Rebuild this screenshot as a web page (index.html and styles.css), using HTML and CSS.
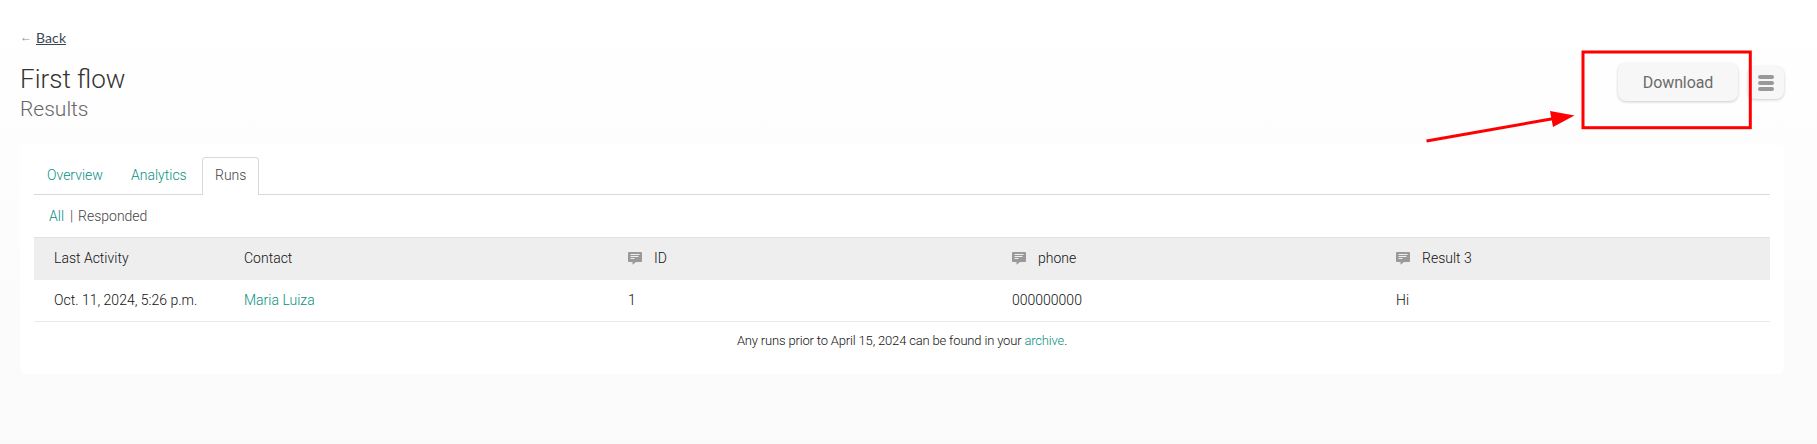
FILE: index.html
```html
<!DOCTYPE html>
<html lang="en">
<head>
<meta charset="utf-8">
<title>First flow - Results</title>
<link rel="stylesheet" href="styles.css">
</head>
<body>
<svg class="defs" width="0" height="0" aria-hidden="true">
  <symbol id="comment" viewBox="0 0 14 13">
    <path fill="#999" d="M1 0h12a1 1 0 0 1 1 1v8a1 1 0 0 1-1 1H8L4.500 12.700V10H1a1 1 0 0 1-1-1V1a1 1 0 0 1 1-1z"/>
    <path stroke="#eee" stroke-width="1" d="M2.500 2.500h9M2.500 4.500h8M2.500 6.500h4"/>
  </symbol>
</svg>
<main class="page">
  <nav class="back"><span class="back-arrow">←</span><a class="back-link" href="#">Back</a></nav>
  <header class="header">
    <div class="titles">
      <h1 class="title">First flow</h1>
      <div class="subtitle">Results</div>
    </div>
    <div class="actions">
      <button class="download">Download</button>
      <button class="menu" aria-label="Menu"><i class="bar"></i><i class="bar"></i><i class="bar"></i></button>
    </div>
  </header>
  <section class="card">
    <div class="tabs">
      <a class="tab tab-link" href="#">Overview</a>
      <a class="tab tab-link" href="#">Analytics</a>
      <span class="tab tab-active">Runs</span>
    </div>
    <div class="filters"><a href="#">All</a><span class="divider">|</span><span>Responded</span></div>
    <div class="row head">
      <div>Last Activity</div>
      <div>Contact</div>
      <div><svg class="icon"><use href="#comment"/></svg>ID</div>
      <div><svg class="icon"><use href="#comment"/></svg>phone</div>
      <div><svg class="icon"><use href="#comment"/></svg>Result 3</div>
    </div>
    <div class="row">
      <div>Oct. 11, 2024, 5:26 p.m.</div>
      <div><a href="#">Maria Luiza</a></div>
      <div>1</div>
      <div>000000000</div>
      <div>Hi</div>
    </div>
    <p class="note">Any runs prior to April 15, 2024 can be found in your <a href="#">archive</a>.</p>
  </section>
</main>
<svg class="annotation" viewBox="0 0 1817 444" aria-hidden="true">
  <rect x="1583" y="52" width="167.300" height="75.700" fill="none" stroke="#f00" stroke-width="3"/>
  <path d="M1426.500 141L1554 118.500" stroke="#f00" stroke-width="3"/>
  <path d="M1574.500 115.500L1550 111L1553 127z" fill="#f00"/>
</svg>
</body>
</html>
```

FILE: styles.css
```css
* { box-sizing: border-box; }
body {
  margin: 0;
  height: 444px;
  overflow: hidden;
  background: linear-gradient(#fff, #fafafa);
  font-family: Roboto, sans-serif;
  font-weight: 300;
  font-size: 14px;
  color: #111;
}
a { color: #088f82; text-decoration: none; }
.defs { position: absolute; }
.page { padding: 28px 33px 0 20px; }
.back { display: flex; height: 20px; line-height: 20px; gap: 4px; }
.back-arrow { width: 12px; color: #8a8f9c; font: 12px/19px "Liberation Sans", sans-serif; }
.back-link { color: #3c4653; font-family: Lato, sans-serif; font-weight: 400; text-decoration: underline; letter-spacing: 0.1px; }
.header { display: flex; justify-content: space-between; height: 97px; padding-top: 15px; }
.title { margin: 0; font-size: 26px; line-height: 32px; font-weight: 300; color: #333; }
.subtitle { font-size: 21px; line-height: 28px; color: #666; }
.actions { display: flex; align-items: flex-start; gap: 10px; }
.download, .menu {
  border: 0;
  padding: 0;
  background: #f7f7f7;
  border-radius: 8px;
  box-shadow: 0 1px 3px rgba(0, 0, 0, .2);
}
.download { width: 120px; height: 38px; font: 400 16px/38px Roboto, sans-serif; letter-spacing: -0.1px; padding-top: 1px; color: #6b6b6b; }
.menu {
  display: flex;
  flex-direction: column;
  align-items: center;
  justify-content: center;
  gap: 2px;
  width: 36px;
  height: 33px;
  margin-top: 3px;
}
.bar { width: 16px; height: 4px; border-radius: 2px; background: #999; }
.card { height: 229px; padding: 12px 14px 0; background: #fff; border-radius: 7px; }
.tabs { display: flex; height: 38px; border-bottom: 1px solid #d9d9d9; }
.tab { height: 38px; padding: 0 13px; line-height: 37px; }
.tab-link { width: 84px; }
.tab-active {
  width: 57px;
  padding: 0 12px;
  line-height: 35px;
  color: #444;
  background: #fff;
  border: 1px solid #d9d9d9;
  border-bottom: 0;
  border-radius: 4px 4px 0 0;
}
.filters { display: flex; height: 42px; padding-left: 15px; line-height: 43px; color: #444; }
.divider { width: 8px; margin-left: 6px; }
.row {
  display: grid;
  grid-template-columns: 190px 384px 384px 384px 1fr;
  align-items: center;
  height: 42px;
  padding: 0 0 2px 20px;
  border-bottom: 1px solid #eaeaea;
}
.head { height: 43px; background: #eee; border-top: 1px solid #e2e2e2; border-bottom: 0; }
.row > div { display: flex; align-items: center; }
.icon { width: 14px; height: 13px; margin: 1px 12px 0 0; }
.note { margin: 0; padding-top: 9px; text-align: center; font-size: 13px; line-height: 20px; letter-spacing: -0.165px; }
.annotation { position: absolute; left: 0; top: 0; width: 1817px; height: 444px; }
```
